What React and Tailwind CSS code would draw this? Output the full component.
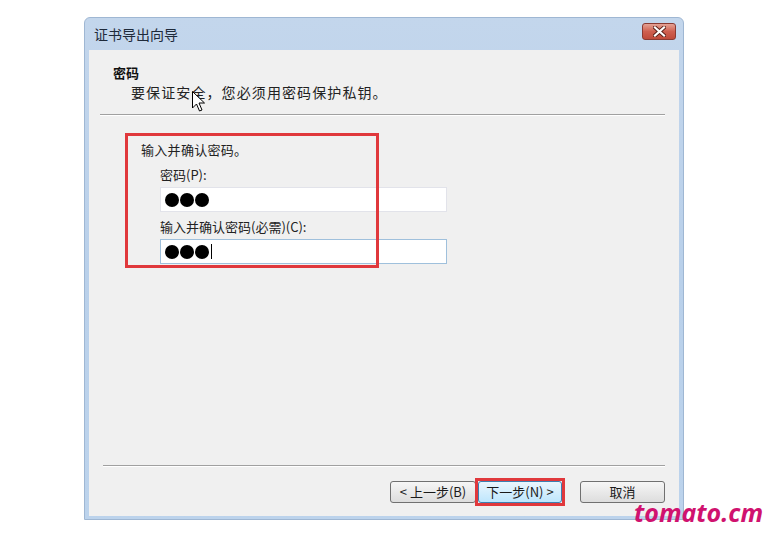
import React from 'react';

const cjk = { fontFamily: '"Noto Sans CJK SC", "Microsoft YaHei", sans-serif' };

function Dots({ count = 3 }) {
  return (
    <div className="flex items-center gap-[1px]">
      {Array.from({ length: count }).map((_, i) => (
        <div key={i} className="w-[14px] h-[14px] rounded-full bg-black" />
      ))}
    </div>
  );
}

function WinButton({ children, focused }) {
  return (
    <button
      className={
        'h-[22px] rounded-[3px] border text-[13px] leading-none text-[#1a1a1a] flex items-center justify-center ' +
        (focused
          ? 'border-[#3c7fb1] bg-gradient-to-b from-[#eaf6fd] to-[#bee6fd]'
          : 'border-[#707070] bg-gradient-to-b from-[#f6f6f6] to-[#dddddd]')
      }
      style={cjk}
    >
      {children}
    </button>
  );
}

export default function App() {
  return (
    <div className="relative w-[768px] h-[539px] bg-white overflow-hidden" style={cjk}>
      {/* 窗口 */}
      <div className="ml-[84px] mt-[17px] w-[600px] h-[503px] flex flex-col rounded-t-[6px] bg-gradient-to-b from-[#c3d6ec] via-[#b9d0ea] to-[#bcd3ec] border border-[#9fb7d3]">
        <div className="h-[32px] flex items-center justify-between pl-[9px] pr-[7px]">
          <span className="text-[14px] text-[#1e2a3a]">证书导出向导</span>
          <div className="w-[34px] h-[17px] mt-[-5px] rounded-[3px] border border-[#8a3a32] bg-gradient-to-b from-[#e4a295] via-[#cf5f4f] to-[#c04a3a] flex items-center justify-center">
            <svg width="13" height="11" viewBox="0 0 13 11">
              <path d="M2 1.5 L11 9.5 M11 1.5 L2 9.5" stroke="#5a2018" strokeWidth="4" strokeLinecap="square" />
              <path d="M2 1.5 L11 9.5 M11 1.5 L2 9.5" stroke="#ffffff" strokeWidth="2.2" strokeLinecap="square" />
            </svg>
          </div>
        </div>

        <div className="flex-1 mx-[4px] mb-[3px] bg-[#f0f0f0] flex flex-col">
          {/* 标题区 */}
          <div className="pt-[15px] pl-[24px]">
            <div className="text-[13px] font-bold text-[#111] leading-[16px]">密码</div>
            <div className="pl-[18px] mt-[3px] text-[14px] leading-[17px] tracking-[1.1px] text-[#222]">
              要保证安全，您必须用密码保护私钥。
            </div>
          </div>
          <div className="mt-[13px] ml-[11px] mr-[14px] h-[2px] border-t border-[#a0a0a0] border-b border-b-white" />

          {/* 内容区 */}
          <div className="relative pl-[52px] pt-[26px] flex flex-col">
            <div className="text-[13px] leading-[16px] tracking-[0.3px] text-[#222]">输入并确认密码。</div>
            <div className="pl-[19px] mt-[9px] flex flex-col">
              <div className="text-[13px] leading-[16px] text-[#222]">密码(P):</div>
              <div className="mt-[4px] w-[287px] h-[25px] bg-white border border-[#e2e3ea] flex items-center pl-[4px]">
                <Dots />
              </div>
              <div className="mt-[7px] text-[13px] leading-[16px] text-[#222]">输入并确认密码(必需)(C):</div>
              <div className="mt-[4px] w-[287px] h-[25px] bg-white border border-[#9fc0dc] flex items-center pl-[4px]">
                <Dots />
                <div className="ml-[2px] w-[1px] h-[15px] bg-black" />
              </div>
            </div>
            <div className="absolute left-[36px] top-[17px] w-[254px] h-[135px] border-[3px] border-[#e0383c]" />
          </div>

          <div className="flex-1" />
          <div className="ml-[14px] mr-[14px] h-[2px] border-t border-[#a0a0a0] border-b border-b-white" />
          <div className="h-[49px] flex items-center pl-[301px]">
            <WinButton><span className="w-[84px]">&lt; 上一步(B)</span></WinButton>
            <div className="ml-[-1px] border-[3px] border-[#e0383c]">
              <WinButton focused><span className="w-[82px]">下一步(N) &gt;</span></WinButton>
            </div>
            <div className="ml-[15px]">
              <WinButton><span className="w-[83px]">取消</span></WinButton>
            </div>
          </div>
        </div>
      </div>

      {/* 鼠标指针 */}
      <svg className="absolute left-[192px] top-[91px]" width="14" height="22" viewBox="0 0 14 22">
        <path d="M0.5 0.5 L0.5 17 L4.5 13 L7.5 20 L10 19 L7 12 L12.5 12 Z" fill="#fff" stroke="#000" strokeWidth="1" strokeLinejoin="round" />
      </svg>

      {/* 水印 */}
      <div
        className="absolute left-[634px] top-[500px] text-[25px] font-bold italic text-[#d0126f] leading-none"
        style={{ fontFamily: '"Open Sans", "Liberation Sans", sans-serif' }}
      >
        tomato.cm
      </div>
    </div>
  );
}
